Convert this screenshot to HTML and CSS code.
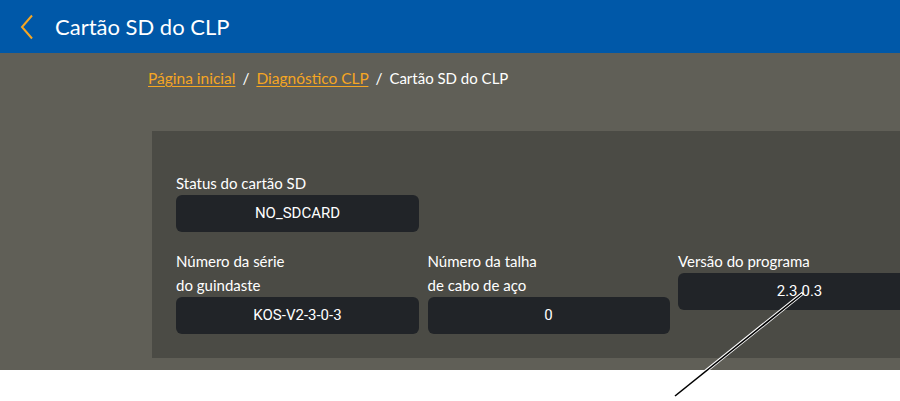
FILE: index.html
```html
<!DOCTYPE html>
<html lang="pt">
<head>
<meta charset="utf-8">
<title>Cartão SD do CLP</title>
<link rel="stylesheet" href="styles.css">
</head>
<body>
<header class="topbar">
  <svg class="back" width="14" height="26" viewBox="0 0 14 26" aria-hidden="true">
    <path d="M12 1.5 L2 13 L12 24.5" fill="none" stroke="#f5a623" stroke-width="2"/>
  </svg>
  <h1 class="title">Cartão SD do CLP</h1>
</header>
<main class="main">
  <nav class="crumbs">
    <a class="crumb-link" href="#">Página inicial</a>
    <span class="sep">/</span>
    <a class="crumb-link" href="#">Diagnóstico CLP</a>
    <span class="sep">/</span>
    <span class="crumb-current">Cartão SD do CLP</span>
  </nav>
  <section class="card">
    <div class="field">
      <div class="label">Status do cartão SD</div>
      <div class="value">NO_SDCARD</div>
    </div>
    <div class="field field-row2">
      <div class="label">Número da série<br>do guindaste</div>
      <div class="value">KOS-V2-3-0-3</div>
    </div>
    <div class="field">
      <div class="label">Número da talha<br>de cabo de aço</div>
      <div class="value">0</div>
    </div>
    <div class="field">
      <div class="label">Versão do programa</div>
      <div class="value">2.3.0.3</div>
    </div>
  </section>
</main>
<svg class="annot" width="900" height="401" viewBox="0 0 900 401" aria-hidden="true">
  <line x1="676" y1="395" x2="803" y2="293" stroke="#ffffff" stroke-width="3.5"/>
  <line x1="675" y1="396" x2="802" y2="294" stroke="#000000" stroke-width="1.6"/>
</svg>
</body>
</html>
```
FILE: styles.css
```css
html, body {
  margin: 0;
  padding: 0;
}
body {
  background: #ffffff;
  font-family: Lato, "Noto Sans", "Liberation Sans", sans-serif;
  overflow: hidden;
  width: 900px;
  height: 401px;
  position: relative;
}
.topbar {
  height: 53px;
  background: #0058a8;
  display: flex;
  align-items: center;
  padding-left: 20px;
}
.back {
  display: block;
}
.title {
  margin: 0 0 0 21px;
  color: #ffffff;
  font-weight: 400;
  font-size: 22px;
  line-height: 30px;
}
.main {
  background: #605f57;
  height: 317px;
  padding: 13px 0 0 148px;
  box-sizing: border-box;
  overflow: hidden;
}
.crumbs {
  font-size: 15.5px;
  line-height: 24px;
  color: #ffffff;
  white-space: nowrap;
}
.crumb-link {
  color: #f5a623;
  text-decoration: underline;
  text-underline-offset: 2px;
}
.sep {
  margin: 0 3px;
  color: #ffffff;
}
.crumb-current {
  color: #ffffff;
  font-size: 15px;
}
.card {
  margin: 41px 0 0 4px;
  width: 790px;
  background: #4b4b45;
  padding: 40px 24px 24px;
  display: grid;
  grid-template-columns: 243px 242px 243px;
  column-gap: 8.5px;
  row-gap: 17px;
  align-items: start;
}
.field-row2 {
  grid-column: 1;
}
.label {
  color: #ffffff;
  font-size: 15px;
  line-height: 24px;
}
.value {
  height: 37px;
  line-height: 37px;
  background: #212428;
  border-radius: 6px;
  color: #ffffff;
  text-align: center;
  font-family: Roboto, Lato, sans-serif;
  font-size: 15px;
}
.annot {
  position: absolute;
  left: 0;
  top: 0;
  pointer-events: none;
}
```
